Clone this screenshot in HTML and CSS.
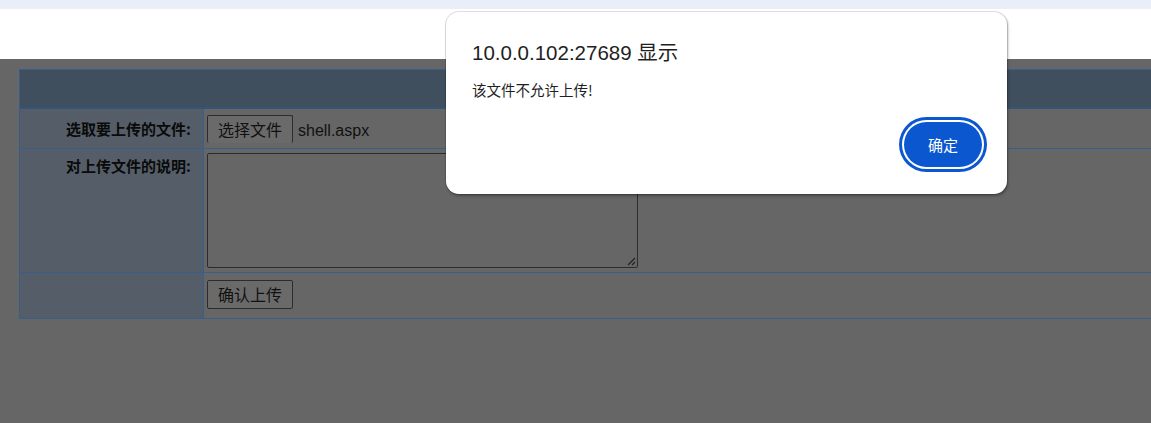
FILE: index.html
```html
<!DOCTYPE html>
<html lang="zh-CN">
<head>
<meta charset="utf-8">
<title>上传文件</title>
<link rel="stylesheet" href="styles.css">
</head>
<body>
<div class="topband"></div>
<div class="whiteband"></div>
<main class="page">
  <table class="upload">
    <tr class="head"><td colspan="2"><div class="cell h-head"></div></td></tr>
    <tr>
      <td class="label"><div class="cell h-row1 lab1">选取要上传的文件:</div></td>
      <td class="field"><div class="cell h-row1 fld1"><span class="filebtn">选择文件</span><span class="fname">shell.aspx</span></div></td>
    </tr>
    <tr>
      <td class="label"><div class="cell h-row2 lab2">对上传文件的说明:</div></td>
      <td class="field"><div class="cell h-row2 fld2"><div class="textarea"><svg class="grip" width="9" height="9" viewBox="0 0 9 9"><path d="M8 1 L1 8 M8 5 L5 8" stroke="#222" stroke-width="1.2" fill="none"/></svg></div></div></td>
    </tr>
    <tr>
      <td class="label"><div class="cell h-row3"></div></td>
      <td class="field"><div class="cell h-row3 fld3"><span class="btn">确认上传</span></div></td>
    </tr>
  </table>
</main>
<div class="dialog">
  <div class="title">10.0.0.102:27689 显示</div>
  <div class="msg">该文件不允许上传!</div>
  <div class="actions"><span class="ok">确定</span></div>
</div>
</body>
</html>
```
FILE: styles.css
```css
html, body {
  margin: 0;
  padding: 0;
  width: 1151px;
  height: 423px;
  overflow: hidden;
  background: #666666;
  font-family: "Liberation Sans", "Noto Sans CJK SC", sans-serif;
}
.topband {
  height: 9px;
  background: #e9eef8;
}
.whiteband {
  height: 50px;
  background: #ffffff;
}
.page {
  padding: 10px 0 0 19px;
  background: #666666;
  height: 364px;
  box-sizing: border-box;
}
.upload {
  border-collapse: separate;
  border-spacing: 0;
  width: 1200px;
  border-top: 1px solid #385f8c;
  border-left: 1px solid #385f8c;
}
.upload td {
  padding: 0;
  vertical-align: top;
  border-right: 1px solid #385f8c;
  border-bottom: 1px solid #385f8c;
}
.head td {
  background: #3f4f5e;
  border-bottom: 2px solid #34547a;
}
.cell {
  box-sizing: border-box;
}
.h-head { height: 37px; }
.h-row1 { height: 39px; }
.h-row2 { height: 123px; }
.h-row3 { height: 45px; }
.label {
  width: 183px;
  background: #555e68;
}
.lab1, .lab2 {
  text-align: right;
  padding-right: 12px;
  font-family: "Noto Sans CJK SC", sans-serif;
  font-weight: bold;
  font-size: 15px;
  line-height: 20px;
  color: #0a0a0a;
}
.lab1 { padding-top: 10px; }
.lab2 { padding-top: 7px; }
.field {
  background: #666666;
}
.fld1, .fld2, .fld3 {
  padding-left: 3px;
}
.fld1 { padding-top: 6px; display: flex; align-items: flex-start; }
.fld2 { padding-top: 4px; }
.fld3 { padding-top: 7px; }
.filebtn, .btn {
  display: inline-block;
  box-sizing: border-box;
  width: 86px;
  height: 28px;
  line-height: 26px;
  text-align: center;
  border: 1px solid #2c2c2c;
  border-radius: 2px;
  background: #6a6a6a;
  color: #111;
  font-family: "Noto Sans CJK SC", sans-serif;
  font-size: 16px;
}
.filebtn {
  border-bottom: none;
}
.btn {
  height: 29px;
}
.fname {
  font-size: 16px;
  line-height: 20px;
  color: #111;
  margin-left: 5px;
  padding-top: 6px;
}
.textarea {
  position: relative;
  width: 431px;
  height: 115px;
  box-sizing: border-box;
  border: 1px solid #2c2c2c;
  border-radius: 2px;
}
.grip {
  position: absolute;
  right: 1px;
  bottom: 1px;
}
.dialog {
  position: absolute;
  left: 446px;
  top: 12px;
  width: 561px;
  height: 182px;
  box-sizing: border-box;
  background: #fff;
  border-radius: 13px;
  box-shadow: 0 0 0 1px rgba(0,0,0,0.12), 1px 2px 3px rgba(0,0,0,0.3);
  padding: 27px 25px 0 26px;
  color: #1f1f1f;
}
.title {
  font-size: 20.5px;
  line-height: 28px;
}
.msg {
  font-family: "Noto Sans CJK SC", sans-serif;
  font-size: 14.5px;
  line-height: 20px;
  margin-top: 13px;
}
.actions {
  display: flex;
  justify-content: flex-end;
  margin-top: 22px;
}
.ok {
  display: inline-flex;
  align-items: center;
  justify-content: center;
  width: 78px;
  height: 45px;
  border-radius: 999px;
  background: #0b57d0;
  color: #fff;
  font-family: "Noto Sans CJK SC", sans-serif;
  font-size: 15px;
  box-shadow: 0 0 0 2px #fff, 0 0 0 5px #0b57d0;
}
```
